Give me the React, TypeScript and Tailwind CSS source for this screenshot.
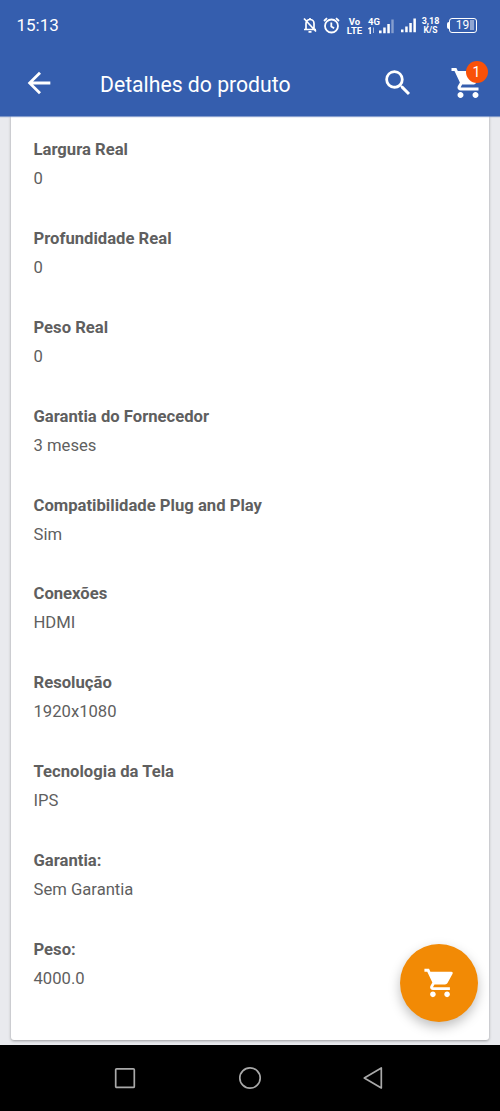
import { MdArrowBack, MdSearch, MdShoppingCart } from "react-icons/md";

const specs = [
  { label: "Largura Real", value: "0" },
  { label: "Profundidade Real", value: "0" },
  { label: "Peso Real", value: "0" },
  { label: "Garantia do Fornecedor", value: "3 meses" },
  { label: "Compatibilidade Plug and Play", value: "Sim" },
  { label: "Conexões", value: "HDMI" },
  { label: "Resolução", value: "1920x1080" },
  { label: "Tecnologia da Tela", value: "IPS" },
  { label: "Garantia:", value: "Sem Garantia" },
  { label: "Peso:", value: "4000.0" },
];

const StatusBar = () => {
  return (
    <div className="flex h-[50px] items-center justify-between pl-[16.5px] pr-[23px]">
      <span className="text-[17px] leading-[20px]">15:13</span>
      <div className="flex items-center">
        <svg
          className="w-[14px] h-[16px]"
          viewBox="0 0 14 16"
          fill="none"
          stroke="currentColor"
          strokeWidth="1.7"
        >
          <path d="M3 12.5V6.5a4 4 0 0 1 8 0v6M1 12.5h12M7 1v2M5.5 14.8h3M1 1.5l12 13" />
        </svg>
        <svg
          className="ml-[6px] w-[17px] h-[17px]"
          viewBox="0 0 17 17"
          fill="none"
          stroke="currentColor"
          strokeWidth="1.8"
        >
          <circle cx="8.5" cy="9" r="6.5" />
          <path d="M8.3 5.5v4l2.8 1.8M1 4l3-2.8M16 4l-3-2.8" />
        </svg>
        <div className="ml-[6px] mt-px flex w-[17px] flex-col items-center text-[9.5px] leading-[9px] font-bold">
          <span>Vo</span>
          <span>LTE</span>
        </div>
        <div className="ml-[5px] flex w-[26px] items-end">
          <div className="flex h-[17px] w-[11px] flex-col text-[9.5px] leading-[9px] font-bold">
            <span>4G</span>
            <svg className="mt-px w-[8px] h-[7px]" viewBox="0 0 8 7" fill="none" stroke="currentColor">
              <path d="M0.3 1.8L2.2 0.8V7" strokeWidth="1.4" />
              <path d="M5.5 0.5V6" opacity=".6" />
            </svg>
          </div>
          <svg className="w-[15px] h-[16px] shrink-0" viewBox="0 0 15 16" fill="currentColor">
            <path d="M0 12.6h2.6v2.6H0zM4.2 9.6h2.5v5.6H4.2zM8.3 6h2.5v9.2H8.3z" />
            <path d="M12.3 1.5h2.4v13.7h-2.4z" opacity=".4" />
          </svg>
        </div>
        <svg className="ml-[7px] w-[15px] h-[16px]" viewBox="0 0 15 16" fill="currentColor">
          <path d="M0 12.6h2.5v2.6H0zM4.2 9.6h2.5v5.6H4.2zM8.3 6h2.5v9.2H8.3zM12.4 1.5h2.5v13.7h-2.5z" />
        </svg>
        <div className="ml-[5px] mt-px flex w-[19px] flex-col items-center text-[9px] leading-[9px] font-bold">
          <span>3,18</span>
          <span className="text-[8.5px]">K/S</span>
        </div>
        <div className="ml-[7px] flex items-center">
          <span className="h-[7px] w-[2px] rounded-l-sm bg-white" />
          <div className="relative flex h-[15px] w-[28px] items-center justify-center rounded-[3px] border-[1.5px] border-white">
            <span className="absolute top-[1.5px] right-[2px] h-[10px] w-[4px] bg-white/45" />
            <span className="mr-[1px] text-[12px] leading-[12px]">19</span>
          </div>
        </div>
      </div>
    </div>
  );
};

const Header = () => {
  return (
    <header className="relative z-10 h-[116px] shrink-0 bg-[#355eae] text-white shadow-[0_1px_1px_rgba(53,94,174,0.6)]">
      <StatusBar />
      <div className="flex h-[66px] items-center pl-[22px] pr-[14.5px]">
        <button>
          <MdArrowBack className="size-[34px]" />
        </button>
        <h1 className="ml-[44px] flex-1 pt-[3px] text-[21.2px] leading-[28px]">
          Detalhes do produto
        </h1>
        <button>
          <MdSearch className="size-[34px]" />
        </button>
        <button className="relative ml-[34.5px]">
          <MdShoppingCart className="size-[36px]" />
          <span className="absolute -top-[4px] left-[16px] flex size-[22px] items-center justify-center rounded-full bg-[#f95108] text-[14px]">
            1
          </span>
        </button>
      </div>
    </header>
  );
};

const NavBar = () => {
  return (
    <nav className="flex h-[66.5px] shrink-0 items-center justify-between bg-black px-[113px] text-[#a9a9a9]">
      <svg className="size-[24px]" viewBox="0 0 24 24" fill="none" stroke="currentColor" strokeWidth="1.7">
        <rect x="2.7" y="2.8" width="18.6" height="18.6" rx="1" />
      </svg>
      <svg className="size-[24px]" viewBox="0 0 24 24" fill="none" stroke="currentColor" strokeWidth="1.7">
        <circle cx="12" cy="12" r="10.2" />
      </svg>
      <svg className="size-[24px]" viewBox="0 0 24 24" fill="none" stroke="currentColor" strokeWidth="1.7" strokeLinejoin="round">
        <path d="M18.3 2v20L1.3 12z" />
      </svg>
    </nav>
  );
};

const App = () => {
  return (
    <div className="relative flex h-[1111px] w-[500px] flex-col overflow-hidden bg-[#e9eaee] font-[Roboto,sans-serif]">
      <Header />
      <main className="flex-1 px-[11px] pb-[5px]">
        <div className="h-full rounded-b-[3px] bg-white px-[22.5px] pt-[19px] shadow-[0_1px_3px_rgba(0,0,0,0.35)]">
          <dl className="text-[16.65px] leading-[29px] text-[#5f5f5f]">
            {specs.map((spec) => (
              <div key={spec.label} className="h-[88.9px]">
                <dt className="font-bold">{spec.label}</dt>
                <dd>{spec.value}</dd>
              </div>
            ))}
          </dl>
        </div>
      </main>
      <NavBar />
      <button className="absolute top-[944px] left-[400px] flex size-[78px] items-center justify-center rounded-full bg-[#f28a05] pl-[2px] text-white shadow-[0_5px_12px_rgba(0,0,0,0.25)]">
        <MdShoppingCart className="size-[34px]" />
      </button>
    </div>
  );
};

export default App;
